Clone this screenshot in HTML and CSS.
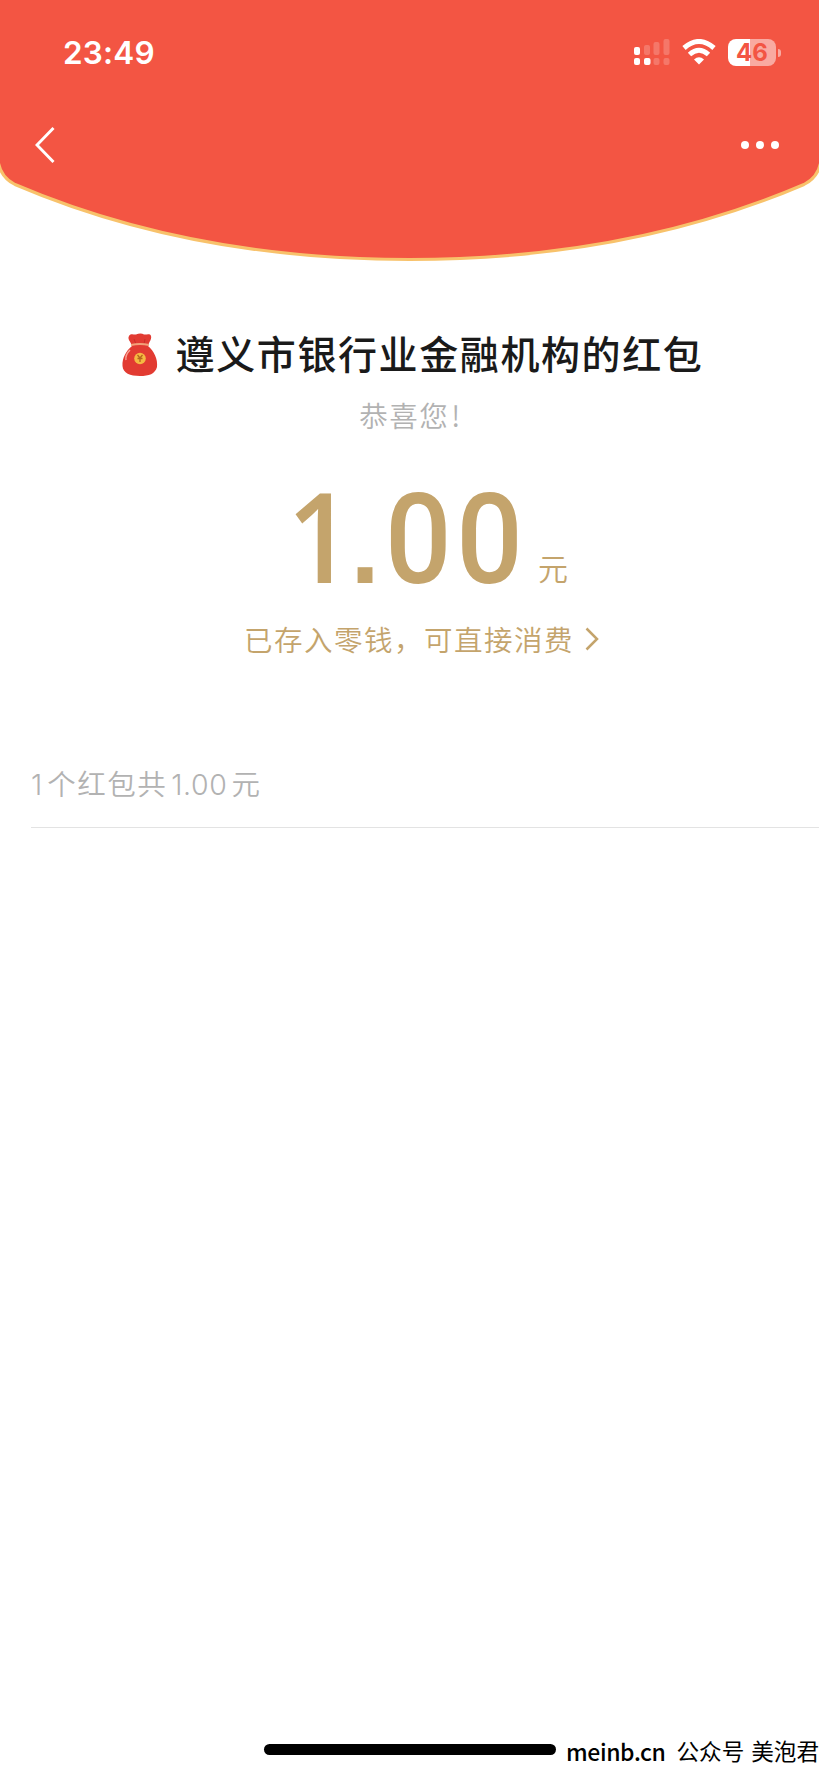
FILE: index.html
```html
<!DOCTYPE html>
<html lang="zh-CN">
<head>
<meta charset="utf-8">
<title>红包</title>
<link rel="stylesheet" href="styles.css">
</head>
<body>
<div class="screen">
  <header class="header">
    <svg class="header-bg" width="819" height="264" viewBox="0 0 819 264">
      <path d="M-2 -4V160Q0 177 15 184.500Q190 259.500 409.500 259.500Q629 259.500 804 184.500Q819 177 821 160V-4Z" fill="#f35543" stroke="#f8c26b" stroke-width="3"/>
    </svg>
    <div class="status">
      <span class="time">23:49</span>
      <div class="status-icons">
        <svg width="36" height="27" viewBox="0 0 36 27" fill="#fff">
          <rect x="0" y="8" width="6" height="8" rx="2"/><rect x="0" y="19" width="6" height="7" rx="2"/><rect x="10" y="19" width="6.500" height="7" rx="2"/>
          <g opacity=".2"><rect x="10" y="6" width="6" height="10" rx="2"/><rect x="19.500" y="3" width="6" height="13" rx="2"/><rect x="29.500" y="0" width="6" height="16" rx="2"/><rect x="19.500" y="19" width="6" height="7" rx="2"/><rect x="29.500" y="19" width="6" height="7" rx="2"/></g>
        </svg>
        <svg class="wifi" width="34" height="26" viewBox="0 0 34 26" fill="none" stroke="#fff" stroke-width="5">
          <path d="M2 9Q17 -4 32 9M7.500 15.500Q17 7 26.500 15.500"/><path d="M17 25.500L12 20.500Q17 16 22 20.500Z" fill="#fff" stroke="none"/>
        </svg>
        <div class="battery"><span>46</span></div>
        <i class="battery-tip"></i>
      </div>
    </div>
    <nav class="nav">
      <svg width="20" height="36" viewBox="0 0 20 36" fill="none" stroke="#fff" stroke-width="2.900"><path d="M18.500 1L2 18L18.500 35"/></svg>
      <div class="more"><i></i><i></i><i></i></div>
    </nav>
  </header>
  <main>
    <h1 class="title">
      <svg width="36" height="44" viewBox="0 0 36 44">
        <path d="M10 13C9 9 5 6 7 3C9 0 12 2 14 1.500C17 0 20 0 22 1.500C24 2 28 0 29 3C30 6 27 9 26 13C32 18 36 26 35 34C33 41 27 43 18 43C8 43 1 40 .500 33C0 25 4 18 10 13Z" fill="#e23b32"/>
        <path d="M12 6L14 11M23 6L22 11" stroke="#c93028" fill="none"/>
        <path d="M9 12Q18 10 27 12" stroke="#f2a179" stroke-width="2" fill="none"/>
        <path d="M8 17Q3 22 4 27" stroke="#f7a193" stroke-width="1.500" fill="none"/>
        <circle cx="18" cy="25.500" r="5.800" fill="#f5b942"/><path d="M15.500 22L18 25L20.500 22M18 25V29M15.500 25.500H20.500" stroke="#b5651d" stroke-width="1.300" fill="none"/>
      </svg>
      <span>遵义市银行业金融机构的红包</span>
    </h1>
    <p class="wish">恭喜您<span>!</span></p>
    <div class="amount"><span class="one">1</span><span class="dot">.</span><span class="zeros">00</span><span class="unit">元</span></div>
    <div class="saved"><span>已存入零钱，可直接消费</span>
      <svg width="14" height="24" viewBox="0 0 14 24" fill="none" stroke="#c4a46c" stroke-width="2.500"><path d="M1.500 1.500L12 12L1.500 22.500"/></svg>
    </div>
    <div class="summary"><span class="num count">1</span><span>个红包共</span><span class="num total">1.00</span><span>元</span></div>
  </main>
  <footer class="footer"><div class="home"></div><div class="mark"><span class="site">meinb.cn</span><span>公众号</span><span>美泡君</span></div></footer>
</div>
</body>
</html>
```
FILE: styles.css
```css
* { box-sizing: border-box; }
body { margin: 0; background: #fff; font-family: "Noto Sans CJK SC", sans-serif; }
.screen { width: 819px; height: 1772px; overflow: hidden; display: flex; flex-direction: column; }
svg { display: block; flex: none; }
.header { position: relative; height: 264px; flex: none; color: #fff; }
.header-bg { position: absolute; left: 0; top: 0; }
.status { position: relative; display: flex; justify-content: space-between; height: 104px; padding: 33px 38px 0 63px; }
.time { font: 600 31.500px/40px Inter, sans-serif; letter-spacing: .2px; }
.status-icons { display: flex; align-items: flex-start; padding-top: 6px; }
.status-icons .wifi { margin-left: 12px; }
.battery { width: 48px; height: 27px; margin-left: 12px; border-radius: 8px; background: linear-gradient(90deg, #fff 46%, #f9aaa1 46%); color: #f35543; font: 700 24px/27px Inter, sans-serif; text-align: center; }
.battery-tip { width: 3px; height: 8px; margin: 10px 0 0 2px; border-radius: 0 4px 4px 0; background: #f9aaa1; }
.nav { position: relative; display: flex; justify-content: space-between; padding: 23px 40px 0 35px; }
.more { display: flex; gap: 7px; padding-top: 14px; }
.more i { width: 8px; height: 8px; border-radius: 50%; background: #fff; }
main { flex: 1; display: flex; flex-direction: column; align-items: center; }
.title { display: flex; align-items: center; gap: 18px; height: 60px; margin: 58px 0 0; padding-left: 6px; font-size: 39px; font-weight: 500; line-height: 60px; letter-spacing: 1.600px; color: #1a1a1a; white-space: nowrap; }
.title svg { margin-top: 6px; }
.wish { margin: 12px 0 0; padding-left: 2px; font-size: 28.500px; font-weight: 350; line-height: 42px; letter-spacing: 1.500px; color: #b2b2b2; }
.wish span { margin-left: 2px; }
.amount { display: flex; align-items: baseline; align-self: stretch; height: 130px; margin-top: 34px; padding-left: 287px; line-height: 130px; color: #c4a46c; }
.one { margin-right: -8px; font: 600 125px/130px "Open Sans", sans-serif; transform: scaleX(.92); transform-origin: left; }
.dot { width: 34.500px; font: 700 105px/130px "Liberation Sans", sans-serif; }
.zeros { width: 143px; font: 550 126px/130px Roboto, sans-serif; letter-spacing: 5px; transform: scaleX(.93); transform-origin: left; }
.unit { margin-left: 10px; font-size: 30px; font-weight: 350; transform: translateY(-3px); }
.saved { display: flex; align-items: center; gap: 11px; margin-top: 18px; padding-left: 24px; font-size: 28.500px; font-weight: 350; line-height: 42px; letter-spacing: 1.500px; color: #c4a46c; }
.summary { display: flex; align-items: baseline; align-self: stretch; height: 70px; margin: 98px 0 0 31px; border-bottom: 1px solid #e3e3e3; font-size: 28.500px; font-weight: 350; line-height: 50px; letter-spacing: 1.500px; color: #b2b2b2; }
.num { font-family: Inter, sans-serif; letter-spacing: 0; }
.count { margin-right: 5px; }
.total { margin: 0 4px; letter-spacing: .6px; }
.footer { display: flex; align-items: flex-start; height: 40px; padding-left: 264px; }
.home { flex: none; width: 292px; height: 11px; margin-top: 12px; border-radius: 6px; background: #000; }
.mark { display: flex; gap: 7px; margin-left: 10px; font-size: 22.600px; font-weight: 400; line-height: 38px; color: #000; white-space: nowrap; }
.site { margin-right: 4px; font-size: 23px; font-weight: 500; letter-spacing: -.4px; }
```
